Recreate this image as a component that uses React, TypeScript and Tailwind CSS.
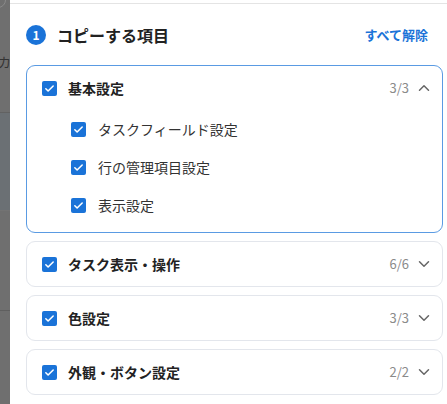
import { ChevronDown, ChevronUp } from 'lucide-react';

const font = { fontFamily: '"Noto Sans CJK JP", "Noto Sans", sans-serif' };

function Check({ size = 15 }: { size?: number }) {
  return (
    <span
      className="flex items-center justify-center rounded-[2px] bg-[#1a73d8] shrink-0"
      style={{ width: size, height: size }}
    >
      <svg width="11" height="11" viewBox="0 0 24 24" fill="none">
        <path d="M4 12.5l5 5L20 6.5" stroke="white" strokeWidth="3.4" strokeLinecap="round" strokeLinejoin="round" />
      </svg>
    </span>
  );
}

interface SectionProps {
  title: string;
  count: string;
  open?: boolean;
  items?: string[];
}

function Section({ title, count, open = false, items = [] }: SectionProps) {
  return (
    <div
      className={`rounded-[9px] border bg-white ${
        open ? 'border-[#5a9be3] pb-2' : 'border-[#e3e6ec]'
      }`}
    >
      <div className="flex h-[44px] items-center pl-[15px] pr-[9px]">
        <Check />
        <span className="ml-[11px] text-[14px] font-bold text-[#222]">{title}</span>
        <span className="ml-auto text-[13px] text-[#8a8a8a]">{count}</span>
        <span className="ml-[6px] text-[#666]">
          {open ? <ChevronUp size={18} strokeWidth={2} /> : <ChevronDown size={18} strokeWidth={2} />}
        </span>
      </div>
      {open &&
        items.map((item) => (
          <div key={item} className="flex h-[38px] items-center pl-[44px]">
            <Check />
            <span className="ml-[12px] text-[14px] text-[#333]">{item}</span>
          </div>
        ))}
    </div>
  );
}

export default function App() {
  return (
    <div className="flex h-[404px] w-[447px] overflow-hidden bg-white" style={font}>
      {/* dimmed page behind the dialog */}
      <div className="relative flex w-[10px] shrink-0 flex-col bg-[#6f6f6f]">
        <div className="absolute -left-[10px] -top-[12px] h-[20px] w-[16px] rounded-full border border-[#8a8a8a]" />
        <div className="h-[53px]" />
        <div className="-ml-[2px] text-[13px] leading-[18px] text-[#333]">カ</div>
        <div className="h-[41px]" />
        <div className="h-[98px] border-t border-[#626262] bg-[#6b7074]" />
        <div className="h-[100px] border-t border-[#737373]" />
        <div className="flex-1 border-t border-[#5f5f5f]" />
      </div>

      <div className="flex flex-1 flex-col">
        <div className="h-[3px]" />
        <div className="border-t border-[#e4e4e4]" />
        <div className="flex items-center pl-4 pr-[19px] pt-[21px]">
          <span className="flex h-5 w-5 items-center justify-center rounded-full bg-[#1a73d8] text-[12px] font-bold text-white">
            1
          </span>
          <span className="ml-[11px] text-[16px] font-bold leading-5 text-[#222]">コピーする項目</span>
          <span className="ml-auto text-[13px] font-bold leading-5 text-[#1a73d8]">すべて解除</span>
        </div>

        <div className="mt-5 flex flex-col gap-2 pl-4 pr-1">
          <Section
            title="基本設定"
            count="3/3"
            open
            items={['タスクフィールド設定', '行の管理項目設定', '表示設定']}
          />
          <Section title="タスク表示・操作" count="6/6" />
          <Section title="色設定" count="3/3" />
          <Section title="外観・ボタン設定" count="2/2" />
        </div>
      </div>
    </div>
  );
}
